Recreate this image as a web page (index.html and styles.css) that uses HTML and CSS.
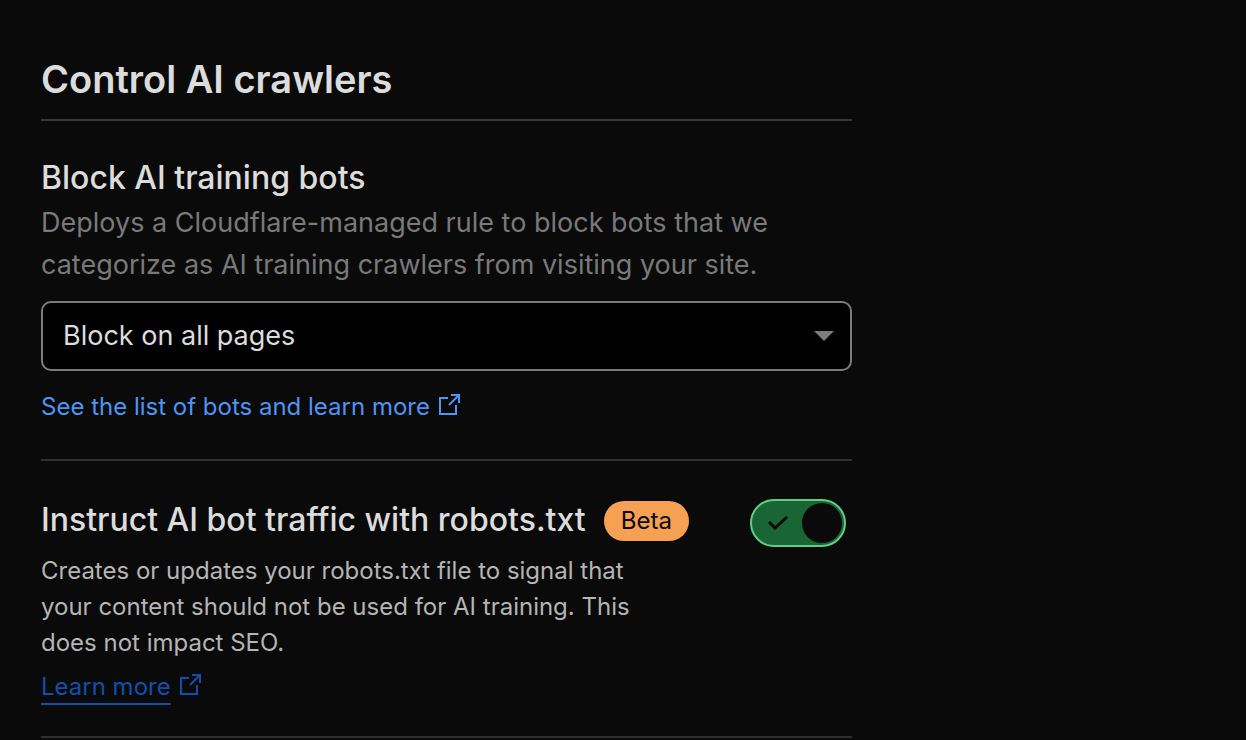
FILE: index.html
```html
<!DOCTYPE html>
<html lang="en">
<head>
  <meta charset="UTF-8" />
  <meta name="viewport" content="width=device-width, initial-scale=1.0" />
  <title>Control AI crawlers</title>
  <link rel="stylesheet" href="styles.css">
</head>
<body>

<main class="container">
  <h1>Control AI crawlers</h1>

  <!-- Block training bots -->
  <section class="setting">
    <h2><label for="block-bots">Block AI training bots</label></h2>
    <p class="hint">Deploys a Cloudflare-managed rule to block bots that we categorize as AI training crawlers from visiting your site.</p>
    <div class="select-box">
      <select id="block-bots">
        <option>Block on all pages</option>
        <option>Block only on hostnames with ads</option>
        <option>Do not block</option>
      </select>
      <svg class="arrow" viewBox="0 0 20 10" aria-hidden="true"><path d="M0 0h20L10 10z" /></svg>
    </div>
    <a class="link" href="#bots">
      <span>See the list of bots and learn more</span>
      <svg class="external" viewBox="0 0 22 22" aria-hidden="true"><path d="M10 4H2v16h16v-9M13 1h8v8M21 1l-10 10" /></svg>
    </a>
  </section>

  <!-- robots.txt -->
  <section class="setting setting-row">
    <div class="info">
      <div class="title">
        <h2><label for="robots">Instruct AI bot traffic with robots.txt</label></h2>
        <span class="badge">Beta</span>
      </div>
      <p class="description">Creates or updates your robots.txt file to signal that your content should not be used for AI training. This does not impact SEO.</p>
      <a class="link link-dark" href="#robots-txt">
        <span>Learn more</span>
        <svg class="external" viewBox="0 0 22 22" aria-hidden="true"><path d="M10 4H2v16h16v-9M13 1h8v8M21 1l-10 10" /></svg>
      </a>
    </div>
    <div class="toggle">
      <input type="checkbox" id="robots" checked>
      <svg class="check" viewBox="0 0 20 14" aria-hidden="true"><path d="M1 6l6 6L19 1" /></svg>
    </div>
  </section>
</main>

</body>
</html>
```
FILE: styles.css
```css
* {
  box-sizing: border-box;
}

body {
  margin: 0;
  background: #0a0a0a;
  color: #dcdcdc;
  font-family: Inter, "Liberation Sans", sans-serif;
  font-size: 24px;
  line-height: 36px;
}

h1,
h2,
p {
  margin: 0;
}

.container {
  max-width: 893px;
  padding: 55px 41px 0;
}

h1 {
  padding-bottom: 16px;
  border-bottom: 2px solid #373737;
  font-size: 38px;
  font-weight: 600;
  line-height: 48px;
}

h2 {
  font-size: 32px;
  font-weight: 500;
  line-height: 40px;
}

.setting {
  padding: 37px 0 34px;
  border-bottom: 2px solid #303030;
}

.hint {
  margin: 4px 0 15px;
  color: #797979;
  font-size: 27px;
  line-height: 42px;
}

.select-box {
  position: relative;
  margin-bottom: 18px;
}

.select-box select {
  display: block;
  width: 100%;
  height: 70px;
  padding: 0 60px 0 20px;
  appearance: none;
  border: 2px solid #7c7c7c;
  border-radius: 10px;
  background: #000;
  color: #dcdcdc;
  font: inherit;
  font-size: 27px;
}

.arrow {
  position: absolute;
  top: 30px;
  right: 18px;
  width: 20px;
  height: 10px;
  fill: #7c7c7c;
  pointer-events: none;
}

.link {
  display: flex;
  align-items: center;
  gap: 8px;
  width: fit-content;
  color: #4f94f3;
  text-decoration: none;
}

.external {
  width: 22px;
  height: 22px;
  margin-bottom: 4px;
  fill: none;
  stroke: currentColor;
  stroke-width: 2;
}

.link-dark {
  color: #114fad;
}

.link-dark span {
  text-decoration: underline 2px;
  text-underline-offset: 8px;
}

.setting-row {
  display: flex;
  justify-content: space-between;
  padding: 38px 6px 31px 0;
}

.title {
  display: flex;
  align-items: center;
  gap: 18px;
  white-space: nowrap;
}

.badge {
  margin-top: 2px;
  padding: 2px 17px;
  border-radius: 20px;
  background: #f6a054;
  color: #0a0a0a;
}

.description {
  max-width: 610px;
  margin: 12px 0 8px;
  color: #b5b5b5;
}

.toggle {
  position: relative;
  height: 48px;
}

.toggle input {
  display: block;
  width: 96px;
  height: 48px;
  margin: 0;
  padding: 2px;
  appearance: none;
  border: 2px solid #5fce84;
  border-radius: 24px;
  background: #196534;
  cursor: pointer;
}

.toggle input::before {
  content: "";
  display: block;
  width: 40px;
  height: 40px;
  border-radius: 50%;
  background: #0a0a0a;
}

.toggle input:checked::before {
  margin-left: auto;
}

.check {
  position: absolute;
  top: 17px;
  left: 18px;
  width: 20px;
  height: 14px;
  fill: none;
  stroke: #0a0a0a;
  stroke-width: 3;
  pointer-events: none;
}
```
